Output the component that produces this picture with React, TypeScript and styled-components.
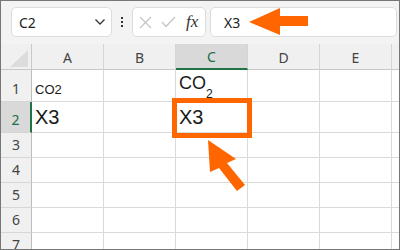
import { Fragment } from "react";
import styled, { createGlobalStyle } from "styled-components";

const Global = createGlobalStyle`
  html, body {
    margin: 0;
    padding: 0;
    background: #fff;
  }
`;

const Frame = styled.div`
  position: relative;
  width: 400px;
  height: 250px;
  box-sizing: border-box;
  border: 1px solid #767676;
  background: #f3f3f3;
  overflow: hidden;
  font-family: "Noto Sans", "Liberation Sans", sans-serif;
`;

const Toolbar = styled.div`
  display: flex;
  align-items: center;
  height: 43px;
  box-sizing: border-box;
  padding: 6px 0 7px 10px;
`;

const NameBox = styled.div`
  display: flex;
  align-items: center;
  justify-content: space-between;
  width: 101px;
  height: 30px;
  box-sizing: border-box;
  padding: 0 5px 0 7px;
  background: #fff;
  border: 1px solid #dcdcdc;
  border-radius: 5px;
  font-size: 14px;
  color: #222;
`;

const Dots = styled.div`
  display: flex;
  flex-direction: column;
  gap: 2px;
  margin: 0 9px 0 9px;

  span {
    width: 2px;
    height: 2px;
    background: #333;
  }
`;

const IconBox = styled.div`
  display: flex;
  align-items: center;
  gap: 9px;
  width: 74px;
  height: 30px;
  box-sizing: border-box;
  padding-left: 6px;
  background: #fff;
  border: 1px solid #dcdcdc;
  border-radius: 5px;
`;

const Fx = styled.span`
  font-family: "Liberation Serif", serif;
  font-style: italic;
  font-size: 17px;
  color: #333;
  margin-left: 1px;
`;

const FormulaInput = styled.div`
  display: flex;
  align-items: center;
  flex: 1;
  height: 30px;
  box-sizing: border-box;
  margin-left: 4px;
  margin-right: 2px;
  padding-left: 13px;
  background: #fff;
  border: 1px solid #dcdcdc;
  border-radius: 5px;
  font-size: 14px;
  color: #222;
`;

const Sheet = styled.div`
  display: grid;
  grid-template-columns: 31px repeat(6, 72px);
  grid-template-rows: 26px 32px 31px repeat(5, 25px);
  background: #fff;
`;

const Corner = styled.div`
  position: relative;
  background: #f0f0f0;
  border-right: 1px solid #c8c8c8;
  border-bottom: 1px solid #c8c8c8;

  &::after {
    content: "";
    position: absolute;
    left: 9px;
    top: 6px;
    width: 18px;
    height: 17px;
    background: #dcdcdc;
    clip-path: polygon(100% 0, 100% 100%, 0 100%);
  }
`;

const ColHead = styled.div<{ $active?: boolean }>`
  display: flex;
  align-items: center;
  justify-content: center;
  box-sizing: border-box;
  padding-top: 1px;
  background: ${(p) => (p.$active ? "#d9d9d9" : "#f0f0f0")};
  border-right: 1px solid #d4d4d4;
  border-bottom: ${(p) => (p.$active ? "2px solid #217346" : "1px solid #c8c8c8")};
  color: ${(p) => (p.$active ? "#1e6b47" : "#444")};
  font-size: 14px;
`;

const RowHead = styled.div<{ $active?: boolean }>`
  display: flex;
  align-items: flex-end;
  justify-content: center;
  box-sizing: border-box;
  padding-bottom: 3px;
  background: ${(p) => (p.$active ? "#d9d9d9" : "#f0f0f0")};
  border-right: ${(p) => (p.$active ? "2px solid #217346" : "1px solid #bdbdbd")};
  border-bottom: 1px solid #d6d6d6;
  color: ${(p) => (p.$active ? "#1e6b47" : "#444")};
  font-size: 14px;
`;

const Cell = styled.div<{ $size?: number; $lift?: number }>`
  display: flex;
  align-items: flex-end;
  box-sizing: border-box;
  padding: 0 0 ${(p) => p.$lift ?? 3}px 3px;
  border-right: 1px solid #dadada;
  border-bottom: 1px solid #dadada;
  font-family: "Liberation Sans", Arial, sans-serif;
  font-size: ${(p) => p.$size ?? 14}px;
  line-height: 1.15;
  color: #1a1a1a;
  white-space: nowrap;

  sub {
    font-size: 0.68em;
    line-height: 0;
    vertical-align: -0.2em;
  }
`;

const Highlight = styled.div`
  position: absolute;
  left: 171px;
  top: 97px;
  width: 80px;
  height: 40px;
  box-sizing: border-box;
  border: 5px solid #ff6600;
`;

const Pointer = styled.svg`
  position: absolute;
  left: 0;
  top: 0;
  pointer-events: none;
`;

const cols = ["A", "B", "C", "D", "E", ""];

type CellData = { text?: React.ReactNode; size?: number; lift?: number };

const empty = (): CellData[] => [{}, {}, {}, {}, {}, {}];

const rows: CellData[][] = [
  [
    { text: "CO2", size: 13 },
    {},
    { text: <>CO<sub>2</sub></>, size: 18, lift: 7 },
    {},
    {},
    {},
  ],
  [{ text: "X3", size: 20 }, {}, { text: "X3", size: 20 }, {}, {}, {}],
  empty(),
  empty(),
  empty(),
  empty(),
  empty(),
];

export default function App() {
  return (
    <>
      <Global />
      <Frame>
        <Toolbar>
          <NameBox>
            <span>C2</span>
            <svg width="12" height="8" viewBox="0 0 12 8">
              <polyline points="1.5,1.5 6,6 10.5,1.5" fill="none" stroke="#333" strokeWidth="1.3" />
            </svg>
          </NameBox>
          <Dots>
            <span />
            <span />
            <span />
          </Dots>
          <IconBox>
            <svg width="13" height="13" viewBox="0 0 13 13">
              <path d="M1 1 L12 12 M12 1 L1 12" stroke="#c4c4c4" strokeWidth="1.2" />
            </svg>
            <svg width="15" height="12" viewBox="0 0 15 12">
              <polyline points="1,6 5,10.5 14,1" fill="none" stroke="#c4c4c4" strokeWidth="1.2" />
            </svg>
            <Fx>fx</Fx>
          </IconBox>
          <FormulaInput>X3</FormulaInput>
        </Toolbar>
        <Sheet>
          <Corner />
          {cols.map((c, i) => (
            <ColHead key={i} $active={c === "C"}>
              {c}
            </ColHead>
          ))}
          {rows.map((row, r) => (
            <Fragment key={r}>
              <RowHead $active={r === 1}>{r + 1}</RowHead>
              {row.map((cell, i) => (
                <Cell key={i} $size={cell.size} $lift={cell.lift}>
                  {cell.text}
                </Cell>
              ))}
            </Fragment>
          ))}
        </Sheet>
        <Highlight />
        <Pointer width="400" height="250" viewBox="1 1 400 250">
          <polygon points="249,22 280,8 280,16 308,16 308,26 280,26 280,35" fill="#ff6600" />
          <polygon points="208,140 236,159 227,163 245,185 237,191 219,168 210,172" fill="#ff6600" />
        </Pointer>
      </Frame>
    </>
  );
}
